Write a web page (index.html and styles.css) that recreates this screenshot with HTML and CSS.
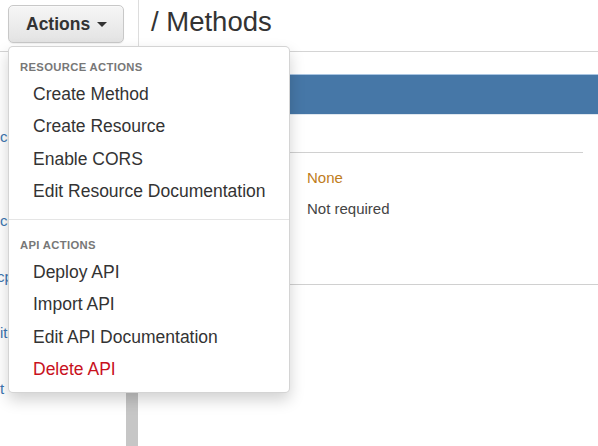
FILE: index.html
```html
<!DOCTYPE html>
<html lang="en">
<head>
<meta charset="utf-8">
<title>Methods</title>
<link rel="stylesheet" href="styles.css">
</head>
<body>
<div class="page">
  <header class="topbar">
    <div class="actions-cell">
      <button class="btn-actions" type="button">Actions <span class="caret"></span></button>
    </div>
    <div class="title-cell">
      <h1 class="title">/ Methods</h1>
    </div>
  </header>

  <div class="main">
    <nav class="sidebar">
      <ul class="tree">
        <li class="node">cors</li>
        <li class="node gap"></li>
        <li class="node gap"></li>
        <li class="node">com</li>
        <li class="node gap"></li>
        <li class="node shift">cp</li>
        <li class="node gap"></li>
        <li class="node">it</li>
        <li class="node gap"></li>
        <li class="node">t</li>
      </ul>
    </nav>
    <div class="splitter"></div>
    <section class="content">
      <div class="method-bar"></div>
      <div class="panel">
        <div class="rule"></div>
        <div class="row first">
          <span class="label"></span>
          <span class="value none">None</span>
        </div>
        <div class="row">
          <span class="label"></span>
          <span class="value">Not required</span>
        </div>
      </div>
      <div class="rule-full"></div>
    </section>
  </div>

  <div class="dropdown">
    <div class="dd-header">Resource Actions</div>
    <a class="dd-item">Create Method</a>
    <a class="dd-item">Create Resource</a>
    <a class="dd-item">Enable CORS</a>
    <a class="dd-item">Edit Resource Documentation</a>
    <div class="dd-divider"></div>
    <div class="dd-header">API Actions</div>
    <a class="dd-item">Deploy API</a>
    <a class="dd-item">Import API</a>
    <a class="dd-item">Edit API Documentation</a>
    <a class="dd-item danger">Delete API</a>
  </div>
</div>
</body>
</html>
```

FILE: styles.css
```css
* { box-sizing: border-box; }

html, body {
  margin: 0;
  padding: 0;
  background: #fff;
  font-family: "Liberation Sans", Arial, sans-serif;
  color: #333;
}

.page {
  position: relative;
  width: 598px;
  height: 446px;
  overflow: hidden;
}

.topbar {
  display: flex;
  height: 52px;
  border-bottom: 1px solid #d4d4d4;
}

.actions-cell {
  width: 138px;
  padding: 5px 0 0 8px;
}

.btn-actions {
  display: flex;
  align-items: center;
  height: 38px;
  width: 116px;
  padding: 0 15px 0 17px;
  border: 1px solid #c8c8c8;
  border-radius: 5px;
  background: linear-gradient(to bottom, #f6f6f6, #e3e3e3);
  box-shadow: inset 0 1px 0 rgba(255,255,255,.4), 0 1px 1px rgba(0,0,0,.06);
  font-family: "Liberation Sans", Arial, sans-serif;
  font-weight: bold;
  font-size: 17.5px;
  color: #333;
  white-space: pre;
}

.caret {
  display: inline-block;
  width: 0;
  height: 0;
  margin-left: 2px;
  border-top: 5px solid #333;
  border-left: 5px solid transparent;
  border-right: 5px solid transparent;
}

.title-cell {
  flex: 1;
  border-left: 1px solid #ddd;
  height: 51px;
  padding-left: 12px;
}

.title {
  margin: 0;
  padding-top: 2px;
  font-size: 27.5px;
  font-weight: normal;
  line-height: 40px;
  color: #333;
}

.main {
  display: flex;
  height: 394px;
}

.sidebar {
  width: 126px;
  padding-top: 71px;
  overflow: hidden;
}

.tree {
  list-style: none;
  margin: 0;
  padding: 0;
}

.node {
  height: 28px;
  line-height: 28px;
  font-size: 15px;
  color: #3c75b0;
  white-space: nowrap;
}

.node.shift { text-indent: -3px; }

.splitter {
  width: 12px;
  background: #c6c6c6;
}

.content {
  flex: 1;
  padding-top: 22px;
}

.method-bar {
  height: 41px;
  background: #4677a7;
  border-top: 1px solid #a9c5e2;
  border-bottom: 1px solid #dfe7ef;
}

.panel {
  padding: 37px 15px 0 15px;
}

.rule {
  height: 1px;
  background: #d0d0d0;
}

.row {
  display: flex;
  font-size: 15px;
  line-height: 20px;
  margin-top: 11px;
}

.row.first { margin-top: 15px; }

.label {
  width: 154px;
}

.value { color: #444; }
.value.none { color: #c07d1c; }

.rule-full {
  margin-top: 65px;
  height: 1px;
  background: #d0d0d0;
}

.dropdown {
  position: absolute;
  left: 8px;
  top: 46px;
  width: 282px;
  padding: 6.25px 0;
  background: #fff;
  border: 1px solid rgba(0,0,0,.17);
  border-radius: 5px;
  box-shadow: 0 7px 15px rgba(0,0,0,.18);
  z-index: 10;
}

.dd-header {
  padding: 7px 11px 3px;
  line-height: 14.5px;
  font-size: 11.25px;
  font-weight: bold;
  letter-spacing: .35px;
  text-transform: uppercase;
  color: #777;
}

.dd-item {
  display: block;
  padding: 0 24px;
  line-height: 32.5px;
  font-size: 17.5px;
  color: #333;
  white-space: nowrap;
}

.dd-item.danger { color: #c8111d; }

.dd-divider {
  height: 1px;
  margin: 11.25px 0;
  background: #e5e5e5;
}
```
